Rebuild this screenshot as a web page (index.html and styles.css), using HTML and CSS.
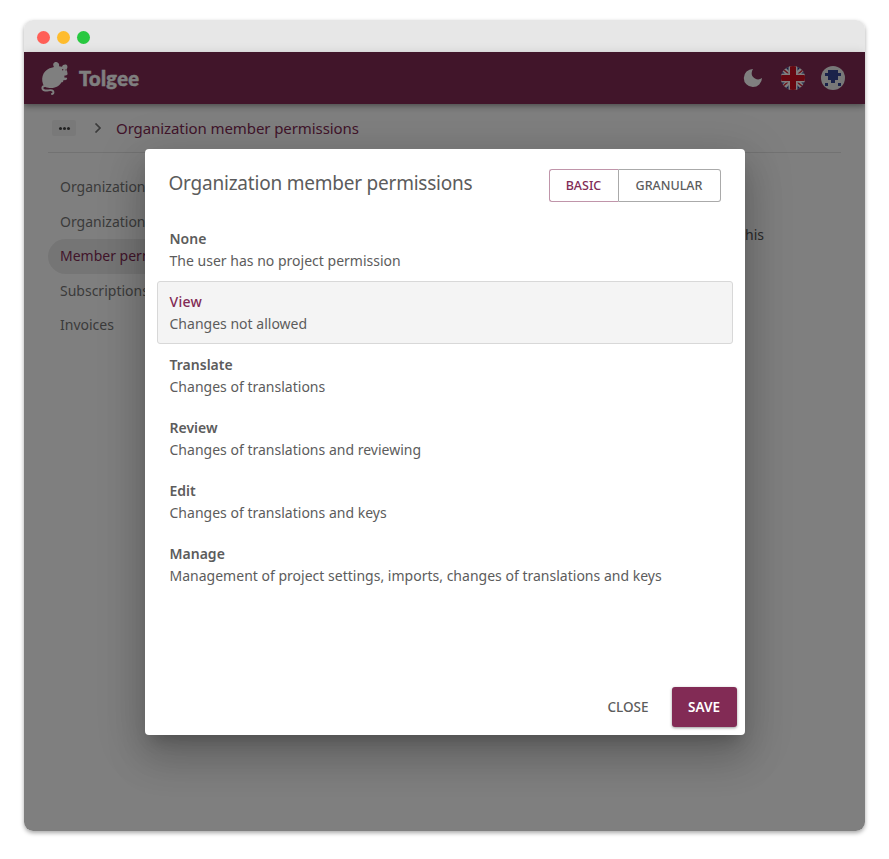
FILE: index.html
```html
<!DOCTYPE html>
<html lang="en">
<head>
<meta charset="utf-8">
<title>Tolgee</title>
<link rel="stylesheet" href="styles.css">
</head>
<body>
<div class="window">
  <div class="titlebar"><span class="dot red"></span><span class="dot yellow"></span><span class="dot green"></span></div>
  <div class="app">
    <header class="appbar">
      <svg class="mouse" width="30" height="36" viewBox="0 0 30 36">
        <path d="M4 24C1.500 17 5 9 13.500 7.600L15 7C13 4 15 1.500 17.500 2C20 2.500 20.500 4.500 20 6.300L23 6.800C23.500 4.500 26 4 27.500 4.700C29 6 28.500 8 27.700 9L28.600 14C28.600 15.500 26.500 15.500 25.500 15.500L25.300 17.500L28 17.800C28.600 19.500 27 20.500 24.500 20C24.500 21.500 23.500 22.500 22.500 22.300C20 26.500 16 28 12 28C8 28 5 27 4 24Z" fill="#fff"/>
        <path d="M6 26C2.500 26 2.500 30 6 30.500C9 31 12 29 14 31C15.200 32.500 14 33.800 13 34" fill="none" stroke="#fff" stroke-width="1.900" stroke-linecap="round"/>
        <circle cx="23.700" cy="9.800" r=".7" fill="#822b55"/><circle cx="27" cy="9.900" r=".6" fill="#822b55"/>
      </svg>
      <span class="brand">Tolgee</span>
      <svg class="moon" width="20" height="20" viewBox="0 0 20 20"><path d="M10 .9A9.1 9.1 0 1 0 19 10.100Q15.500 12.500 12 10.500C8 8 8 4.500 10 .9Z" fill="#fff"/></svg>
      <svg class="flag" width="24" height="24" viewBox="0 0 24 24">
        <clipPath id="c"><circle cx="12" cy="12" r="12"/></clipPath>
        <g clip-path="url(#c)"><path fill="#fff" d="M0 0h24v24H0z"/>
        <path fill="#293788" d="M3 0h5v5zM16 0h5l-5 5zM0 4l4 4H0zM24 4l-4 4h4zM0 16h4l-4 4zM24 16h-4l4 4zM8 19v5H3zM16 19v5h5z"/>
        <path d="M3 4l5 4M23 3l-6 5M1 21l6-5M21 20l-5-4" stroke="#d42735" stroke-width="1.600"/>
        <path fill="#fff" d="M7.500 0h9v24h-9zM0 7.500h24v9H0z"/>
        <path fill="#cc1022" d="M9 0h6v24H9zM0 9h24v6H0z"/></g>
      </svg>
      <svg class="avatar" width="24" height="24" viewBox="0 0 24 24"><circle cx="12" cy="12" r="12" fill="#f0f0f0"/><path fill="#354594" shape-rendering="crispEdges" d="M7 4h10v3h3v3h-3v4h-3v3h-4v-3H7v-4H4V7h3zM4 17h3v3H4zM17 17h3v3h-3z"/></svg>
    </header>
    <div class="page">
      <nav class="crumbs">
        <span class="more"><i></i><i></i><i></i></span>
        <svg width="8" height="10" viewBox="0 0 8 10"><path d="M1.500 .5L6 5L1.500 9.500" fill="none" stroke="#777" stroke-width="1.700"/></svg>
        <span class="crumb">Organization member permissions</span>
      </nav>
      <div class="columns">
        <ul class="menu">
          <li>Organization</li>
          <li>Organization</li>
          <li class="active">Member perm</li>
          <li>Subscriptions</li>
          <li>Invoices</li>
        </ul>
        <p class="info">this</p>
      </div>
    </div>
    <div class="backdrop">
      <section class="dialog">
        <div class="head">
          <h1>Organization member permissions</h1>
          <div class="toggle"><button class="on">BASIC</button><button>GRANULAR</button></div>
        </div>
        <div class="options">
          <div class="option"><b>None</b><span>The user has no project permission</span></div>
          <div class="option selected"><b>View</b><span>Changes not allowed</span></div>
          <div class="option"><b>Translate</b><span>Changes of translations</span></div>
          <div class="option"><b>Review</b><span>Changes of translations and reviewing</span></div>
          <div class="option"><b>Edit</b><span>Changes of translations and keys</span></div>
          <div class="option"><b>Manage</b><span>Management of project settings, imports, changes of translations and keys</span></div>
        </div>
        <div class="actions"><button class="close">CLOSE</button><button class="save">SAVE</button></div>
      </section>
    </div>
  </div>
</div>
</body>
</html>
```
FILE: styles.css
```css
* { box-sizing: border-box; }
body { margin: 0; padding: 20px 24px 28px; background: #fff; font-family: "Noto Sans", "Open Sans", sans-serif; font-size: 14px; color: #5c5c5c; }
button { font: inherit; padding: 0; margin: 0; border: 0; background: none; color: inherit; }
.window { width: 841px; height: 811px; border-radius: 9px; overflow: hidden; box-shadow: 0 2px 4px rgba(0,0,0,.35); }
.titlebar { height: 32px; background: #e7e7e7; display: flex; align-items: center; gap: 7px; padding: 2px 0 0 13px; }
.dot { width: 13px; height: 13px; border-radius: 50%; }
.red { background: #ff5f57; }
.yellow { background: #febc2e; }
.green { background: #28c840; }
.app { position: relative; height: 779px; background: #fff; }
.appbar { height: 52px; background: #822b55; display: flex; align-items: center; padding: 0 20px 0 15px; color: #fff; box-shadow: 0 2px 4px -1px rgba(0,0,0,.2), 0 4px 5px rgba(0,0,0,.14), 0 1px 10px rgba(0,0,0,.12); }
.brand { font-family: Lato, sans-serif; font-weight: 900; font-size: 20px; letter-spacing: .35px; -webkit-text-stroke: .5px #fff; margin-left: 10px; flex: 1; }
.moon { margin-right: 18px; }
.flag { margin-right: 16px; }
.page { padding: 0 24px; }
.crumbs { height: 49px; border-bottom: 1px solid #e4e4e4; display: flex; align-items: center; padding-left: 4px; }
.more { width: 24px; height: 16px; background: #f2f2f2; border-radius: 2px; display: flex; align-items: center; justify-content: center; gap: 1px; margin-right: 18px; }
.more i { width: 3px; height: 3px; border-radius: 50%; background: #444; }
.crumb { margin-left: 14px; font-size: 15px; letter-spacing: -.08px; color: #822b55; }
.columns { display: flex; padding-top: 17px; }
.menu { list-style: none; margin: 0; padding: 0; width: 230px; }
.menu li { height: 34.500px; line-height: 34.500px; padding-left: 12px; border-radius: 18px; color: #777; }
.menu .active { background: #ebebeb; color: #822b55; }
.info { margin: 55px 0 0; width: 486px; text-align: right; color: #555; line-height: 20px; }
.backdrop { position: absolute; inset: 0; background: rgba(0,0,0,.5); display: flex; justify-content: center; align-items: flex-start; padding-top: 97px; }
.dialog { width: 600px; height: 586px; background: #fff; border-radius: 4px; display: flex; flex-direction: column; box-shadow: 0 11px 15px -7px rgba(0,0,0,.2), 0 24px 38px 3px rgba(0,0,0,.14), 0 9px 46px 8px rgba(0,0,0,.12); }
.head { display: flex; justify-content: space-between; align-items: flex-start; padding: 20px 24px 0; height: 69px; }
h1 { margin: 0; font-size: 19px; line-height: 28px; font-weight: 400; letter-spacing: -.22px; }
.toggle { display: flex; width: 172px; height: 33px; font-size: 12.500px; font-weight: 500; letter-spacing: .1px; }
.toggle button { border: 1px solid #aaa; border-left: 0; border-radius: 0 3px 3px 0; flex: 1; }
.toggle .on { flex: 0 0 70px; border: 1px solid #c095aa; border-right-color: #aaa; border-radius: 3px 0 0 3px; color: #822b55; }
.options { padding: 0 12px; flex: 1; }
.option { height: 63px; border: 1px solid transparent; border-radius: 3px; padding: 9px 11px 9px 12px; display: flex; flex-direction: column; line-height: 22px; letter-spacing: .01px; }
.option b { font-weight: 600; }
.selected { background: #f4f4f4; border-color: #d8d8d8; }
.selected b { color: #822b55; font-weight: 500; letter-spacing: .3px; }
.actions { display: flex; justify-content: flex-end; padding: 8px; height: 56px; font-size: 13.500px; font-weight: 500; }
.close { width: 57px; margin-right: 15px; }
.save { width: 65px; height: 40px; border-radius: 3px; background: #822b55; color: #fff; font-weight: 600; box-shadow: 0 1px 3px rgba(0,0,0,.4); }
```
